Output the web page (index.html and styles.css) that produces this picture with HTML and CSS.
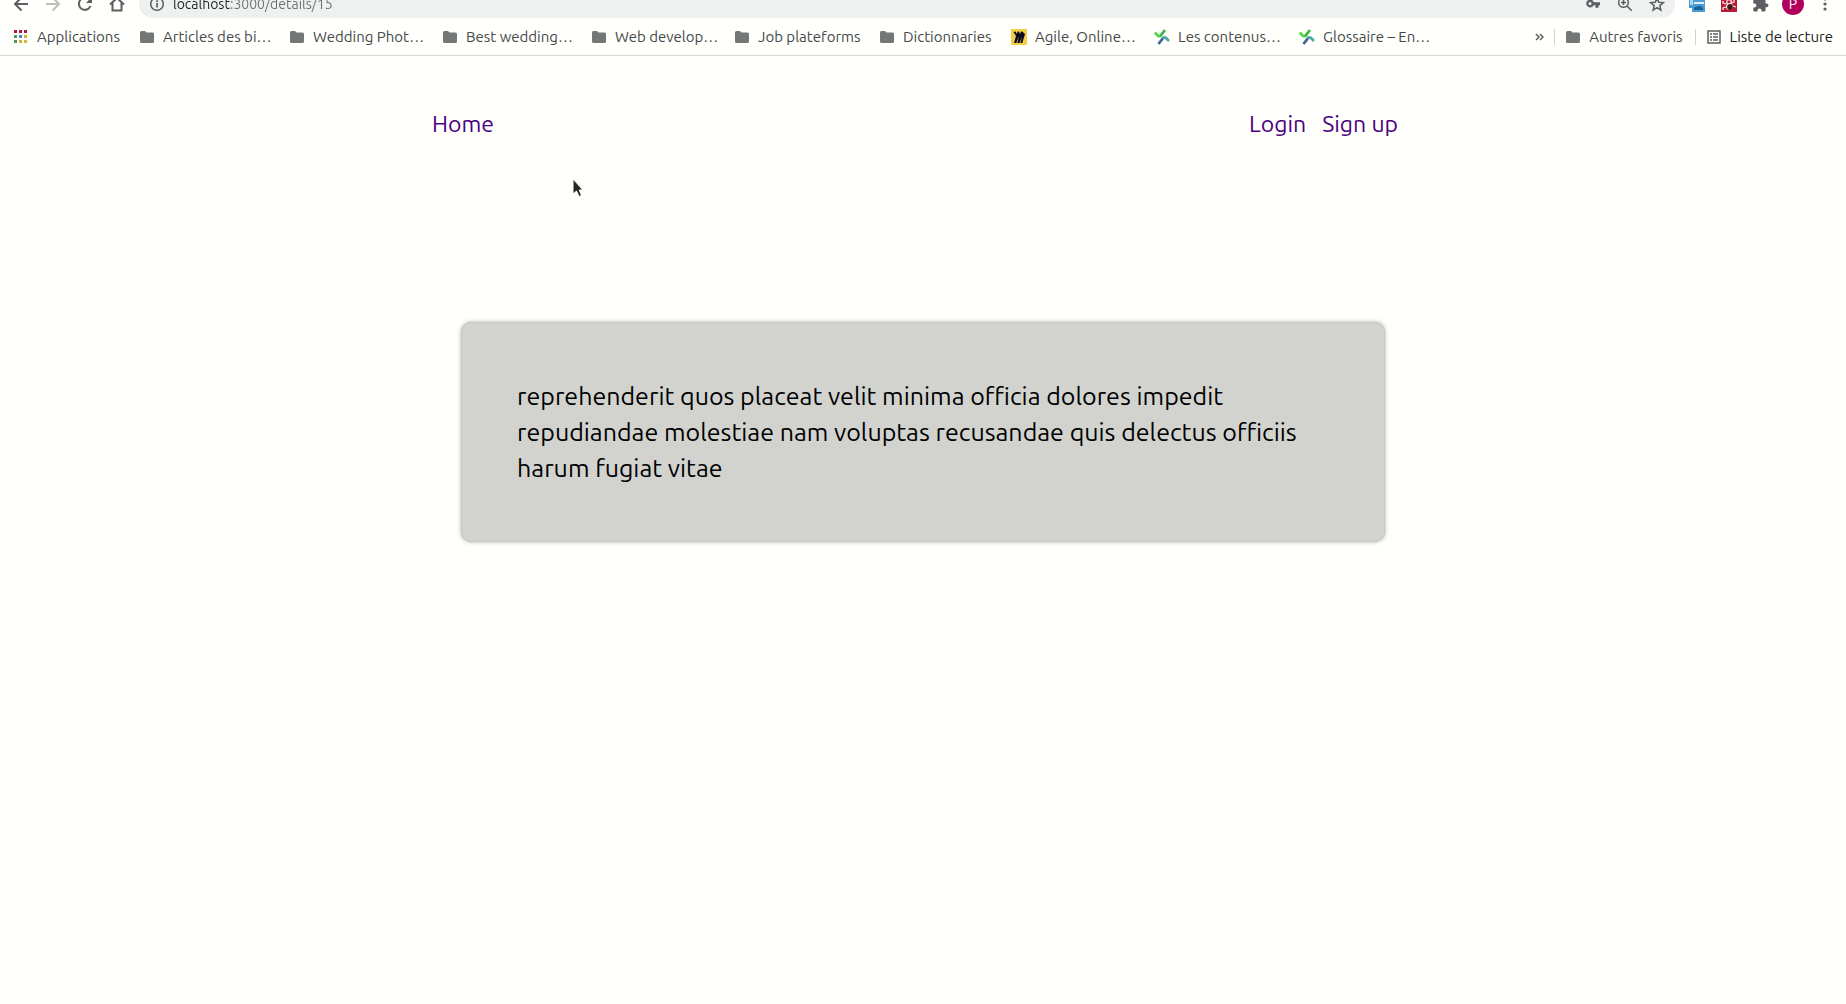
FILE: index.html
```html
<!DOCTYPE html>
<html lang="fr">
<head>
<meta charset="utf-8">
<title>Details</title>
<meta name="viewport" content="width=device-width, initial-scale=1">
<link rel="stylesheet" href="styles.css">
</head>
<body>
<svg class="defs" aria-hidden="true">
  <symbol id="folder" viewBox="0 0 14 12"><path d="M1.500 0H5l1.500 1.500h6A1.500 1.500 0 0 1 14 3v7.500a1.500 1.500 0 0 1-1.500 1.500h-11A1.500 1.500 0 0 1 0 10.500v-9A1.500 1.500 0 0 1 1.500 0z" fill="#737776"/></symbol>
  <symbol id="cross" viewBox="0 0 16 16"><g fill="none" stroke-width="2.800" stroke-linejoin="round"><path d="M.8 3.500l3.400 3.600h2.300" stroke="#54d848"/><path d="M6 7.300L11 1" stroke="#43b649"/><path d="M4.500 15L9.500 8.500" stroke="#3f6594"/><path d="M8.500 8.600h3l3.500 3.300" stroke="#4aa5a4"/></g></symbol>
</svg>
<header class="browser">
  <div class="toolbar-clip">
    <div class="toolbar">
      <button class="tool" aria-label="Back"><svg viewBox="0 0 16 16"><path d="M15 8H2M8.500 1.500L2 8l6.500 6.500" class="line"/></svg></button>
      <button class="tool faded" aria-label="Forward"><svg viewBox="0 0 16 16"><path d="M1 8h13M7.500 1.500L14 8l-6.500 6.500" class="line"/></svg></button>
      <button class="tool" aria-label="Reload"><svg viewBox="0 0 16 16"><path d="M13.500 10A6 6 0 1 1 12.500 4" class="line"/><path d="M15 1v6H9z"/></svg></button>
      <button class="tool" aria-label="Home"><svg viewBox="0 0 16 16"><path d="M1 8.500L8 2l7 6.500M3.500 7v7.500h9V7" class="line"/></svg></button>
      <div class="omnibox">
        <svg class="glyph" viewBox="0 0 16 16"><circle cx="8" cy="8" r="6.300" class="line thin"/><path d="M7.200 7h1.700v4.500H7.200zM7.200 4.300h1.700V6H7.200z"/></svg>
        <input class="url" aria-label="Address" value="localhost:3000/details/15">
        <button class="mini" aria-label="Passwords"><svg viewBox="0 0 16 16"><path d="M5 3.500a4 4 0 0 1 3.800 2.800H15v3h-1.500v2.400h-3V9.300H8.800A4 4 0 1 1 5 3.500zM5 6a1.600 1.600 0 1 0 0 3.200A1.600 1.600 0 0 0 5 6z" fill-rule="evenodd"/></svg></button>
        <button class="mini" aria-label="Zoom"><svg viewBox="0 0 16 16"><circle cx="6.500" cy="6.500" r="4.800" class="line thin"/><path d="M10 10l4.800 4.800M4 6.500h5M6.500 4v5" class="line thin"/></svg></button>
        <button class="mini" aria-label="Bookmark"><svg viewBox="0 0 16 16"><path d="M8 2l1.700 4.300 4.600.3-3.500 3 1.100 4.500L8 11.600l-3.900 2.500 1.100-4.500-3.500-3 4.600-.3z" class="line thin"/></svg></button>
      </div>
      <div class="extensions">
        <button class="tool" aria-label="Screens"><svg viewBox="0 0 16 16"><path d="M0 0h12v12H0z" fill="#3e98d3"/><path d="M3 4h13v12H3z" fill="#4c9bd2"/><path d="M1 4h3v5H1z" fill="#a9d9ee"/><path d="M5 6h10v2H5z" fill="#d9eef7"/><path d="M5 11h2l1-1h4l2 2v2H5z" fill="#12669e"/></svg></button>
        <button class="tool" aria-label="Ladybug"><svg viewBox="0 0 16 16"><path d="M0 0h16v16H0z" fill="#bd1836"/><g fill="none" stroke="#f7e7e3" stroke-width="1.300"><path d="M5 8L2 7V5M5 11l-3 1v2M10 7l3-1V4M12 10l3 1"/><circle cx="8" cy="6" r="2.300"/></g><ellipse cx="8.500" cy="10.500" rx="3.500" ry="3.500" fill="#f7e7e3"/><ellipse cx="9" cy="11" rx="2.800" ry="3" fill="#40131b"/></svg></button>
        <button class="tool" aria-label="Extensions"><svg viewBox="0 0 16 16"><path d="M13.600 7.500h-1.100V4.600c0-.8-.6-1.400-1.400-1.400H8.200V2a1.800 1.800 0 0 0-3.600 0v1.200H1.700C.9 3.200.3 3.800.3 4.600v2.800h1.100a2 2 0 0 1 0 4H.3v2.800c0 .8.600 1.400 1.400 1.400h2.800v-1.100a2 2 0 0 1 4 0v1.100h2.600c.8 0 1.400-.6 1.400-1.400v-3h1.100a1.850 1.850 0 0 0 0-3.700z"/></svg></button>
        <button class="avatar" aria-label="Profile">P</button>
        <button class="tool" aria-label="Menu"><svg viewBox="0 0 16 16"><circle cx="8" cy="3" r="1.600"/><circle cx="8" cy="8" r="1.600"/><circle cx="8" cy="13" r="1.600"/></svg></button>
      </div>
    </div>
  </div>
  <nav class="bookmarks" aria-label="Bookmarks">
    <div class="marks">
      <a href="#"><svg class="apps" viewBox="0 0 13 13"><path d="M0 0h3v3H0zM5 0h3v3H5zM10 0h3v3h-3z" fill="#b5164a"/><path d="M0 5h3v3H0zM0 10h3v3H0z" fill="#4a9f5c"/><path d="M5 5h3v3H5z" fill="#4a86d0"/><path d="M10 5h3v3h-3zM5 10h3v3H5zM10 10h3v3h-3z" fill="#d3b13c"/></svg>Applications</a>
      <a href="#"><svg class="folder"><use href="#folder"/></svg>Articles des bi…</a>
      <a href="#"><svg class="folder"><use href="#folder"/></svg>Wedding Phot…</a>
      <a href="#"><svg class="folder"><use href="#folder"/></svg>Best wedding…</a>
      <a href="#"><svg class="folder"><use href="#folder"/></svg>Web develop…</a>
      <a href="#"><svg class="folder"><use href="#folder"/></svg>Job plateforms</a>
      <a href="#"><svg class="folder"><use href="#folder"/></svg>Dictionnaries</a>
      <a href="#"><svg class="site" viewBox="0 0 16 16"><rect width="16" height="16" rx="1" fill="#f0d044"/><path d="M2.500 3l2-.5L6 5l.5-2.500h1.200L9.300 5l.5-2.500h1.400L14 5l-2.700 9H9.400l1.700-7L8.600 14H6.300L8 7l-2.700 7H3L5 7z" fill="#0c0920"/></svg>Agile, Online…</a>
      <a href="#"><svg class="site"><use href="#cross"/></svg>Les contenus…</a>
      <a href="#"><svg class="site"><use href="#cross"/></svg>Glossaire – En…</a>
    </div>
    <button class="more" aria-label="More bookmarks"><svg viewBox="0 0 9 8"><path d="M1 1l3 3-3 3M5 1l3 3-3 3" class="line thin"/></svg></button>
    <a class="divided" href="#"><svg class="folder"><use href="#folder"/></svg>Autres favoris</a>
    <a class="divided reading" href="#"><svg class="list" viewBox="0 0 14 14"><path d="M1 1h12v12H1z" class="line thin"/><path d="M3 4h2M6 4h5M3 7h2M6 7h5M3 10h2M6 10h5" class="line thin"/></svg>Liste de lecture</a>
  </nav>
</header>
<div class="page">
  <nav class="site-nav" aria-label="Main">
    <a href="#">Home</a>
    <div class="account"><a href="#">Login</a><a href="#">Sign up</a></div>
  </nav>
  <main class="card"><p>reprehenderit quos placeat velit minima officia dolores impedit repudiandae molestiae nam voluptas recusandae quis delectus officiis harum fugiat vitae</p></main>
</div>
<svg class="pointer" viewBox="0 0 12 20" aria-hidden="true"><path d="M1 1v15l3.500-3 2.500 5.500 2.500-1L7.300 12H11z" fill="#262626" stroke="#fff"/></svg>
</body>
</html>
```
FILE: styles.css
```css
* { box-sizing: border-box; }
body {
  margin: 0;
  min-height: 100vh;
  background: #fffffc;
  font-family: Ubuntu, "Noto Sans", sans-serif;
}
a { text-decoration: none; }
button {
  border: 0;
  padding: 0;
  background: none;
  font: inherit;
}
svg { display: block; flex: none; fill: #5b5f61; }
.defs { position: absolute; width: 0; height: 0; }
.line { fill: none; stroke: #5b5f61; stroke-width: 2; }
.thin { stroke-width: 1.5; }

/* Browser chrome */
.browser {
  border-bottom: 1px solid #d5d7d8;
  font-size: 14px;
  color: #45494b;
}
.toolbar-clip {
  display: flex;
  align-items: flex-end;
  height: 18px;
  overflow: hidden;
}
.toolbar {
  flex: 1;
  display: flex;
  align-items: center;
  gap: 16px;
  height: 28px;
  padding: 0 13px;
}
.tool, .tool svg, .mini, .mini svg, .glyph { width: 16px; height: 16px; }
.faded { opacity: .4; }
.omnibox {
  flex: 1;
  display: flex;
  align-items: center;
  height: 28px;
  margin-left: -2px;
  padding: 0 10px;
  border-radius: 14px;
  background: #eff1f0;
}
.url {
  flex: 1;
  min-width: 0;
  margin-left: 8px;
  padding: 0;
  border: 0;
  background: linear-gradient(90deg, #202325 58px, #6b7072 58px) text;
  font: inherit;
  color: transparent;
}
.mini { margin-left: 16px; }
.extensions { display: flex; align-items: center; gap: 16px; margin-left: -2px; }
.avatar {
  width: 22px;
  height: 22px;
  margin: 0 -3px;
  border-radius: 50%;
  background: #b0005c;
  color: #fff;
}
.bookmarks {
  display: flex;
  align-items: center;
  height: 37px;
  padding: 0 13px 0 14px;
  font-size: 15px;
}
.bookmarks a {
  display: flex;
  align-items: center;
  color: inherit;
  white-space: nowrap;
}
.marks {
  flex: 1;
  display: grid;
  grid-template-columns: 126px 150px 153px 149px 143px 145px 131px 143px 145px 133px;
}
.folder { width: 14px; height: 12px; margin-right: 9px; }
.apps { width: 13px; height: 13px; margin-right: 10px; }
.site { width: 16px; height: 16px; margin-right: 8px; }
.list { width: 14px; height: 14px; margin-right: 9px; }
.more { margin-right: 10px; }
.more svg { width: 9px; height: 8px; }
.bookmarks .divided {
  height: 16px;
  margin-right: 12px;
  padding-left: 11px;
  border-left: 1px solid #cfd1d2;
}
.bookmarks .reading { margin-right: 0; color: #202325; }

/* Page */
.page {
  padding: 50px 24px;
  font-size: 23px;
  line-height: 36px;
}
.site-nav {
  display: flex;
  justify-content: space-between;
  max-width: 982px;
  margin: 0 auto;
}
.site-nav a { color: #4b0082; }
.account { display: flex; }
.account a { margin-right: 16px; }
.card {
  max-width: 924px;
  margin: 180px auto 0;
  padding: 55px;
  border: 1px solid #c6c7c4;
  border-radius: 10px;
  background: #d2d3cf;
  box-shadow: 0 0 4px rgba(0, 0, 0, .3);
  color: #000;
}
.card p { margin: 0; font-size: 25px; }
.pointer {
  position: absolute;
  top: 178px;
  left: 572px;
  width: 12px;
  height: 20px;
}
```
